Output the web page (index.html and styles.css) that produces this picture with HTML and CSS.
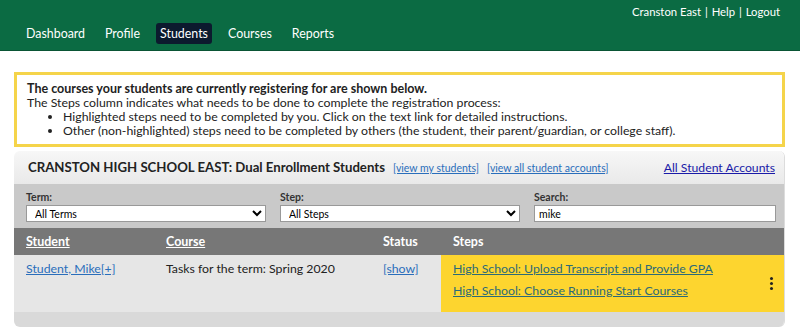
FILE: index.html
```html
<!DOCTYPE html>
<html lang="en">
<head>
    <meta charset="UTF-8">
    <meta name="viewport" content="width=device-width, initial-scale=1.0">
    <title>Students</title>
    <link rel="stylesheet" href="styles.css">
</head>
<body>
    <header class="topbar">
        <div class="util-links">
            <a href="#">Cranston East</a> | <a href="#">Help</a> | <a href="#">Logout</a>
        </div>
        <nav class="mainnav">
            <a href="#">Dashboard</a>
            <a href="#">Profile</a>
            <a href="#" class="active">Students</a>
            <a href="#">Courses</a>
            <a href="#">Reports</a>
        </nav>
    </header>

    <main class="content">
        <div class="notice">
            <strong>The courses your students are currently registering for are shown below.</strong><br>
            The Steps column indicates what needs to be done to complete the registration process:
            <ul>
                <li>Highlighted steps need to be completed by you. Click on the text link for detailed instructions.</li>
                <li>Other (non-highlighted) steps need to be completed by others (the student, their parent/guardian, or college staff).</li>
            </ul>
        </div>

        <section class="panel">
            <div class="panel-head">
                <h2>CRANSTON HIGH SCHOOL EAST: Dual Enrollment Students</h2>
                <a href="#" class="small-link">[view my students]</a>
                <a href="#" class="small-link">[view all student accounts]</a>
                <a href="#" class="all-link">All Student Accounts</a>
            </div>

            <div class="filters">
                <label class="filter">
                    <span>Term:</span>
                    <select><option>All Terms</option></select>
                </label>
                <label class="filter">
                    <span>Step:</span>
                    <select><option>All Steps</option></select>
                </label>
                <label class="filter">
                    <span>Search:</span>
                    <input type="text" value="mike">
                </label>
            </div>

            <table class="students">
                <thead>
                    <tr>
                        <th class="col-student"><a href="#">Student</a></th>
                        <th class="col-course"><a href="#">Course</a></th>
                        <th class="col-status">Status</th>
                        <th class="col-steps">Steps</th>
                    </tr>
                </thead>
                <tbody>
                    <tr>
                        <td><a href="#" class="blue">Student, Mike[+]</a></td>
                        <td>Tasks for the term: Spring 2020</td>
                        <td><a href="#" class="blue">[show]</a></td>
                        <td class="steps">
                            <div class="step-list">
                                <a href="#">High School: Upload Transcript and Provide GPA</a>
                                <a href="#">High School: Choose Running Start Courses</a>
                            </div>
                            <span class="kebab"><i></i><i></i><i></i></span>
                        </td>
                    </tr>
                </tbody>
            </table>
            <div class="panel-foot"></div>
        </section>
    </main>
</body>
</html>
```

FILE: styles.css
```css
body {
    margin: 0;
    font-family: 'Lato', 'Liberation Sans', sans-serif;
    font-size: 12.3px;
    color: #222;
    background: white;
}

a {
    color: inherit;
}

.topbar {
    background: #0b6b43;
    height: 50px;
    border-bottom: 1px solid #0a5535;
    color: white;
}

.util-links {
    text-align: right;
    padding: 5px 19px 0 0;
    font-size: 11.3px;
    height: 16px;
}

.util-links a {
    text-decoration: none;
    margin: 0 1px;
}

.mainnav {
    display: flex;
    gap: 12px;
    padding: 2px 0 0 22px;
}

.mainnav a {
    text-decoration: none;
    font-size: 12.4px;
    padding: 3px 4px;
    border-radius: 3px;
}

.mainnav a.active {
    background: #0c1a2e;
}

.content {
    padding: 21px 15px 0 14px;
}

.notice {
    border: 3px solid #f5d44a;
    padding: 7px 10px 6px;
    line-height: 14px;
}

.notice strong {
    font-size: 12.5px;
}

.notice ul {
    margin: 0;
    padding-left: 36px;
}

.panel {
    margin-top: 4px;
    border-radius: 6px;
    overflow: hidden;
    border-right: 1px solid #dcdcdc;
}

.panel-head {
    display: flex;
    align-items: baseline;
    white-space: nowrap;
    height: 33px;
    box-sizing: border-box;
    padding: 8px 9px 0 14px;
    background: linear-gradient(#f7f7f7, #e9e9e9);
}

.panel-head h2 {
    margin: 0 8px 0 0;
    font-size: 13.2px;
    font-weight: bold;
    color: #222;
}

.small-link {
    font-size: 10.5px;
    color: #2a6ebb;
    margin-right: 8px;
}

.all-link {
    margin-left: auto;
    font-size: 12.2px;
    color: #1a1aa8;
}

.filters {
    display: grid;
    grid-template-columns: 240px 240px 242px;
    gap: 14px;
    padding: 7px 10px 6px 12px;
    background: #c9c9c9;
}

.filter span {
    display: block;
    font-size: 10.5px;
    font-weight: bold;
    color: #333;
    margin-bottom: 2px;
}

.filter select,
.filter input {
    display: block;
    width: 100%;
    box-sizing: border-box;
    height: 17px;
    font-family: inherit;
    font-size: 10.5px;
    padding: 0 4px;
    border: 1px solid #999;
    background: white;
    border-radius: 0;
}

.students {
    width: 100%;
    border-collapse: collapse;
    background: #e6e6e6;
}

.students th {
    background: #777;
    color: white;
    text-align: left;
    font-weight: bold;
    font-size: 12.5px;
    height: 27px;
    padding: 0 0 0 12px;
}

.students th.col-student { width: 129px; }
.students th.col-course { width: 205px; padding-left: 11px; }
.students th.col-status { width: 58px; }
.students th.col-steps { padding-left: 12px; }

.students td {
    vertical-align: top;
    padding: 6px 0 0 12px;
    height: 51px;
}

.students td:nth-child(2) { padding-left: 11px; }

.blue {
    color: #2a6ebb;
}

.students td.steps {
    background: #fdd52f;
    position: relative;
    padding-left: 12px;
}

.step-list {
    margin-top: -3px;
}

.step-list a {
    display: block;
    color: #2c6a78;
    line-height: 22px;
}

.kebab {
    position: absolute;
    right: 11px;
    top: 22px;
    display: flex;
    flex-direction: column;
    gap: 2px;
}

.kebab i {
    width: 3px;
    height: 3px;
    border-radius: 50%;
    background: #222;
}

.panel-foot {
    height: 15px;
    background: #d9d9d9;
}
```
